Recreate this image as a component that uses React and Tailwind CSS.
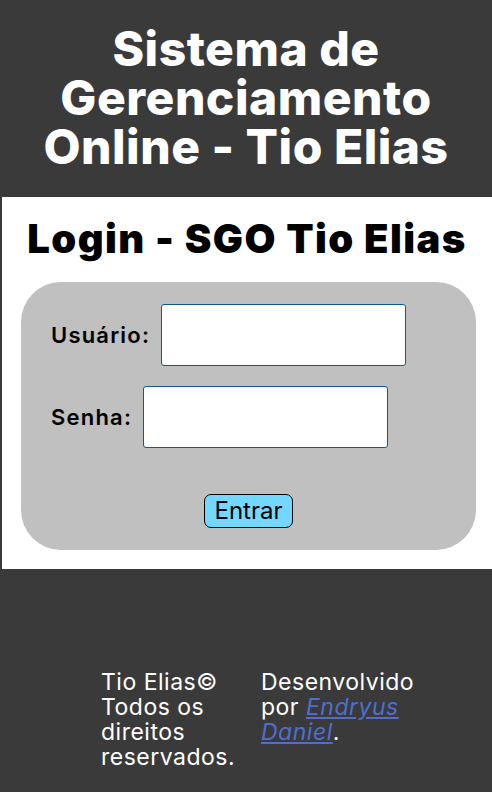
export default function App() {
  return (
    <div className="min-h-[792px] bg-[#3a3a3a] font-['Inter','Roboto',sans-serif]">
      <header className="flex h-[197px] items-center justify-center bg-[#3a3a3a] pb-[2px]">
        <h1 className="text-center text-[48px] font-extrabold leading-[49px] tracking-[0.5px] text-white">
          Sistema de
          <br />
          Gerenciamento
          <br />
          Online - Tio Elias
        </h1>
      </header>

      <main className="border-l-2 border-[#3a3a3a] bg-white pb-[19px]">
        <h2 className="pt-[20px] text-center text-[40px] font-black leading-[44px] tracking-[1.4px] text-black">
          Login - SGO Tio Elias
        </h2>
        <form
          className="ml-[19px] mt-[21px] flex w-[455px] flex-col rounded-[40px] bg-[#c0c0c0] px-[30px] pb-[22px] pt-[22px]"
          onSubmit={(e) => e.preventDefault()}
        >
          <div className="flex items-center gap-[11px]">
            <label className="text-[22px] font-semibold tracking-[1.2px] text-black">Usuário:</label>
            <input
              type="text"
              className="h-[62px] w-[245px] rounded-[3px] border border-[#0f5a8c] bg-white"
            />
          </div>
          <div className="mt-[20px] flex items-center gap-[11px]">
            <label className="text-[22px] font-semibold tracking-[1.2px] text-black">Senha:</label>
            <input
              type="password"
              className="h-[62px] w-[245px] rounded-[3px] border border-[#0f5a8c] bg-white"
            />
          </div>
          <div className="mt-[46px] flex justify-center">
            <button
              type="submit"
              className="h-[34px] w-[89px] rounded-[7px] border border-black bg-[#73d7ff] text-[24px] leading-none text-black"
            >
              Entrar
            </button>
          </div>
        </form>
      </main>

      <footer className="flex pl-[101px] pt-[101px] text-[23px] leading-[25px] tracking-[0.5px] text-white">
        <p className="w-[160px]">
          Tio Elias© Todos os direitos reservados.
        </p>
        <p className="w-[165px]">
          Desenvolvido por{" "}
          <a href="#" className="italic text-[#4f6fcf] underline">
            Endryus Daniel
          </a>
          .
        </p>
      </footer>
    </div>
  );
}
